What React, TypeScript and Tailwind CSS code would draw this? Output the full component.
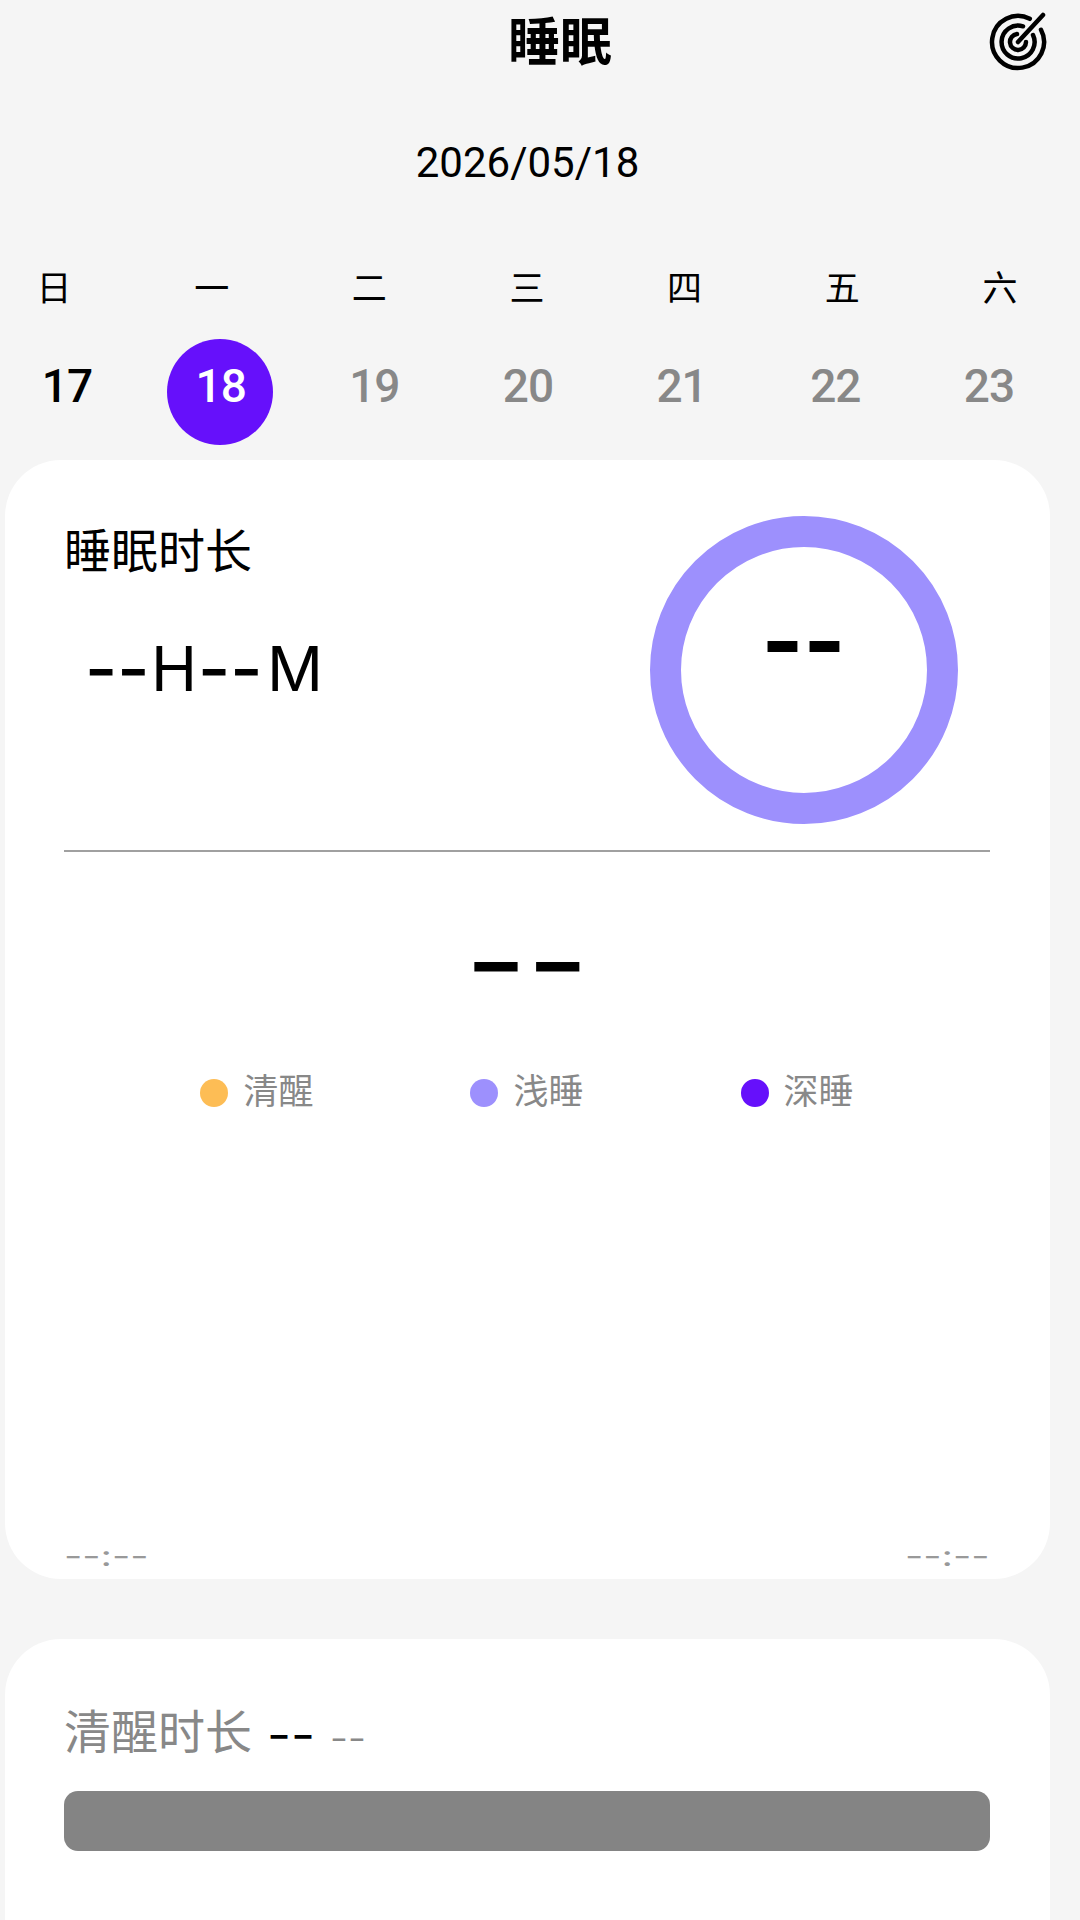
import React from 'react';

const cjk = { fontFamily: 'Roboto, "Noto Sans CJK SC", sans-serif' };

const weekdays = ['日', '一', '二', '三', '四', '五', '六'];
const dates = [17, 18, 19, 20, 21, 22, 23];
const legend = [
  { label: '清醒', color: 'bg-[#fdbd55]' },
  { label: '浅睡', color: 'bg-[#9d90fd]' },
  { label: '深睡', color: 'bg-[#6610fb]' },
];

function TargetIcon() {
  return (
    <svg width="60" height="60" viewBox="0 0 60 60" fill="none" stroke="#000" strokeWidth="4.5" strokeLinecap="round">
      <path d="M41.8 6.8A26 26 0 1 0 53 17.8" />
      <path d="M35 14.3A16.5 16.5 0 1 0 45 23" />
      <path d="M29 22A8 8 0 1 0 38 30" />
      <path d="M30 30L55 3" />
    </svg>
  );
}

export default function App() {
  return (
    <div className="w-[1080px] h-[1920px] overflow-hidden bg-[#f5f5f5] text-black" style={cjk}>
      <div className="w-[1055px]">
        {/* Header */}
        <div className="flex items-center h-[84px] w-[1080px]">
          <h1 className="ml-[508px] pt-[3px] text-[52px] leading-[52px] font-bold">睡眠</h1>
          <div className="ml-auto mr-[32px]">
            <TargetIcon />
          </div>
        </div>

        <div className="mt-[56px] text-center text-[42px] leading-[46px]">2026/05/18</div>

        {/* Week strip */}
        <div className="mt-[80px] flex justify-between pl-[34px] pr-[35px]">
          {weekdays.map((d) => (
            <div key={d} className="w-[40px] text-center text-[35px] leading-[48px]">{d}</div>
          ))}
        </div>
        <div className="mt-[25px] flex justify-between pl-[13px] pr-[14px]">
          {dates.map((d) => (
            <div
              key={d}
              className={`w-[106px] h-[106px] rounded-full flex items-center justify-center pl-[2px] pb-[12px] text-[46px] tracking-[-1px] font-medium ${
                d === 18 ? 'bg-[#6610fb] text-white' : d === 17 ? 'text-black' : 'text-[#888888]'
              }`}
            >
              {d}
            </div>
          ))}
        </div>

        {/* Sleep card */}
        <div className="mt-[15px] mx-[5px] h-[1119px] rounded-[56px] bg-white pl-[59px] pr-[60px] flex flex-col">
          <div className="pt-[56px] pr-[32px] h-[392px] flex justify-between border-b-2 border-[#a0a0a0]">
            <div>
              <div className="mt-[13px] text-[47px] leading-[46px]">睡眠时长</div>
              <div className="mt-[64px] ml-[21px] flex items-center whitespace-nowrap text-[62px] leading-[60px] font-['Inter'] font-normal">
                <span className="inline-block w-[57px] font-semibold scale-x-[1.12] origin-left">--</span>
                <span className="ml-[9px]">H</span>
                <span className="ml-[1px] inline-block w-[57px] font-semibold scale-x-[1.12] origin-left">--</span>
                <span className="ml-[12px]">M</span>
              </div>
            </div>
            <div className="w-[308px] h-[308px] rounded-full border-[31px] border-[#9d90fd] flex items-center justify-center pb-[58px] font-['Inter'] font-extrabold text-[84px] leading-[84px]">
              <span className="inline-block scale-x-[1.06]">--</span>
            </div>
          </div>
          <div className="mt-[55px] text-center font-['Inter'] font-semibold text-[90px] leading-[110px]">
            <span className="inline-block scale-x-[1.47]">--</span>
          </div>
          <div className="mt-[56px] flex justify-center gap-[157px]">
            {legend.map((l) => (
              <div key={l.label} className="flex items-center gap-[15px]">
                <span className={`w-[28px] h-[28px] rounded-full ${l.color}`} />
                <span className="text-[35px] leading-[40px] text-[#888888]">{l.label}</span>
              </div>
            ))}
          </div>
          <div className="mt-auto mb-[6px] flex justify-between font-['Inter'] text-[28px] leading-[34px] text-[#999999]">
            <span className="inline-block scale-x-[1.42] origin-left">--:--</span>
            <span className="inline-block scale-x-[1.42] origin-right">--:--</span>
          </div>
        </div>

        {/* Awake card */}
        <div className="mt-[60px] mx-[5px] h-[300px] rounded-t-[56px] bg-white pl-[59px] pr-[60px] pt-[70px]">
          <div className="flex items-baseline h-[48px] whitespace-nowrap">
            <span className="text-[47px] leading-[48px] text-[#888888]">清醒时长</span>
            <span className="ml-[15px] w-[36px] text-[40px] leading-[48px] font-['Inter'] font-medium inline-block scale-x-[1.3] origin-left">--</span>
            <span className="ml-[27px] text-[30px] leading-[48px] font-['Inter'] text-[#888888] inline-block scale-x-[1.3] origin-left">--</span>
          </div>
          <div className="mt-[34px] h-[60px] rounded-[14px] bg-[#848484]" />
        </div>
      </div>
    </div>
  );
}
